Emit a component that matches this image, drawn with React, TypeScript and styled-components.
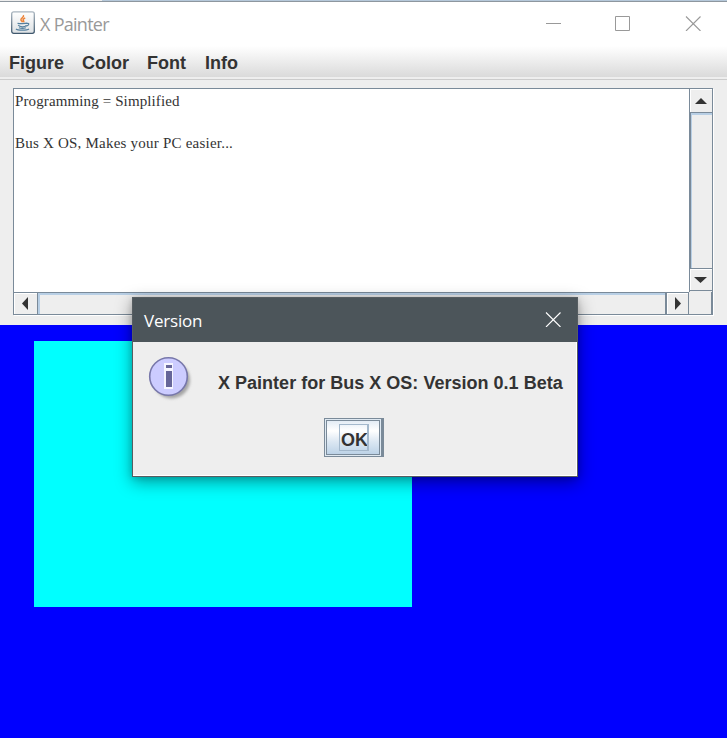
import React from "react";
import styled, { createGlobalStyle } from "styled-components";

const steel = "#7a8a99";
const sky = "#b8cfe5";
const panel = "#eeeeee";
const ink = "#333333";

const GlobalStyle = createGlobalStyle`
  * { box-sizing: border-box; }
  body { margin: 0; overflow: hidden; background: ${panel}; }
`;

const Window = styled.div`
  position: relative;
  display: flex;
  flex-direction: column;
  width: 727px;
  height: 738px;
  overflow: hidden;
  background: ${panel};
  color: ${ink};
  font-family: "Liberation Sans", Arial, sans-serif;
`;

const TopEdge = styled.div`
  height: 2px;
  flex: none;
  background: linear-gradient(90deg, #eeeeee 102px, #b5c8da 102px);
  border-bottom: 1px solid #8e979f;
`;

const TitleBar = styled.header`
  display: flex;
  flex: none;
  height: 44px;
  padding-left: 11px;
  background: #ffffff;
`;

const JavaIcon = styled.svg`
  width: 24px;
  height: 24px;
  margin-top: 8px;
  flex: none;
`;

const Title = styled.span`
  margin: 8px 0 0 5px;
  flex: 1;
  font: 18px/28px "Open Sans", "Noto Sans", sans-serif;
  letter-spacing: -0.72px;
  color: #999999;
`;

const WindowControls = styled.div`
  display: flex;
  gap: 54px;
  padding: 13px 26px 0 0;
`;

const ControlIcon = styled.svg<{ $color: string }>`
  display: block;
  width: 16px;
  height: 16px;
  fill: none;
  stroke: ${(p) => p.$color};
`;

const MenuBar = styled.nav`
  display: flex;
  flex: none;
  gap: 18px;
  height: 34px;
  padding: 5px 0 0 9px;
  border-bottom: 1px solid #cccccc;
  background: linear-gradient(#ffffff, #dadada 31px, #eeeeee 31px);
`;

const MenuItem = styled.span<{ $width: number }>`
  width: ${(p) => p.$width}px;
  font-size: 18px;
  font-weight: bold;
  line-height: 24px;
  white-space: nowrap;
`;

const EditorArea = styled.section`
  flex: none;
  height: 245px;
  padding: 8px 14px 0 13px;
`;

const ScrollPane = styled.div`
  display: grid;
  grid-template: 203px 22px / 675px 23px;
  width: 700px;
  height: 227px;
  border: 1px solid ${steel};
  box-shadow: 1px 1px 0 #ffffff;
`;

const TextPane = styled.div`
  padding: 2px 0 0 1px;
  background: #ffffff;
  font: 15px/21px "Liberation Serif", "Times New Roman", serif;
`;

const Line = styled.div<{ $spacing: number }>`
  height: 21px;
  letter-spacing: ${(p) => p.$spacing}px;
  white-space: pre;
`;

const VerticalBar = styled.div`
  display: grid;
  grid-template-rows: 24px 156px 22px;
  border-left: 1px solid ${steel};
`;

const HorizontalBar = styled.div`
  display: grid;
  grid-template-columns: 24px 629px 22px;
  border-top: 1px solid ${steel};
`;

const ArrowButton = styled.div<{ $side: "bottom" | "right" | "none" }>`
  display: flex;
  align-items: center;
  justify-content: center;
  padding-right: 1px;
  box-shadow: inset 1px 1px 0 #ffffff;
  ${(p) => p.$side !== "none" && `border-${p.$side}: 1px solid ${steel};`}
  svg { display: block; fill: ${ink}; }
`;

const VerticalThumb = styled.div`
  margin-left: -1px;
  border-left: 2px solid ${steel};
  border-bottom: 1px solid ${steel};
  box-shadow: inset 1px 2px 0 ${sky};
`;

const HorizontalThumb = styled.div`
  border-right: 2px solid ${steel};
  box-shadow: inset 2px 2px 0 ${sky};
`;

const Corner = styled.div`
  margin-left: -1px;
  border-left: 1px solid ${steel};
  border-right: 1px solid ${steel};
`;

const Canvas = styled.main`
  position: relative;
  flex: 1;
  background: #0000ff;
`;

const Rectangle = styled.div`
  position: absolute;
  left: 34px;
  top: 16px;
  width: 378px;
  height: 266px;
  background: #00ffff;
`;

const Dialog = styled.div`
  position: absolute;
  left: 132px;
  top: 297px;
  width: 446px;
  height: 180px;
  border: 1px solid #565d61;
  background: ${panel};
  box-shadow: 0 5px 16px rgba(0, 0, 0, 0.4), 0 1px 6px rgba(0, 0, 0, 0.15);
`;

const DialogHeader = styled.div`
  display: flex;
  justify-content: space-between;
  height: 44px;
  padding: 9px 16px 0 11px;
  background: #4c555a;
  color: #ffffff;
  font: 17px/28px "Open Sans", "Noto Sans", sans-serif;
  letter-spacing: -0.2px;
  svg { margin-top: 4px; }
`;

const DialogBody = styled.div`
  display: flex;
  flex-direction: column;
  height: 134px;
  border-right: 1px solid #ffffff;
  border-bottom: 1px solid #ffffff;
`;

const Message = styled.div`
  display: flex;
  height: 76px;
  padding: 12px 0 0 13px;
  font-size: 18px;
  font-weight: bold;
  line-height: 24px;
  white-space: nowrap;
  svg { flex: none; }
  span { margin: 17px 0 0 22px; letter-spacing: 0.015px; }
`;

const OkButton = styled.button`
  display: flex;
  align-items: center;
  justify-content: center;
  align-self: flex-start;
  width: 60px;
  height: 39px;
  margin-left: 191px;
  padding: 0 0 0 2px;
  border: 1px solid ${steel};
  border-right-width: 3px;
  border-radius: 0;
  background: linear-gradient(#dde8f3, #ffffff 32%, #dde8f3 60%, #b8cfe5);
  box-shadow: inset 0 0 0 1px #dfe9f2, inset 0 0 0 2px ${steel};
`;

const OkLabel = styled.span`
  width: 30px;
  height: 27px;
  border: 1px solid #a3b8cc;
  border-right-width: 2px;
  padding-left: 1px;
  color: ${ink};
  font: bold 18px/31px "Liberation Sans", Arial, sans-serif;
  overflow: hidden;
`;

const menus = [
  { label: "Figure", width: 55 },
  { label: "Color", width: 47 },
  { label: "Font", width: 40 },
  { label: "Info", width: 34 },
];

const CloseGlyph = ({ color }: { color: string }) => (
  <ControlIcon $color={color} viewBox="0 0 16 16">
    <path d="M1 1.5 15.5 16M15.5 1.5 1 16" strokeWidth="1.1" />
  </ControlIcon>
);

const JavaCup = () => (
  <JavaIcon viewBox="0 0 24 24">
    <defs>
      <linearGradient id="tile" x1="0" y1="0" x2="0" y2="1">
        <stop offset="0" stopColor="#ffffff" />
        <stop offset="1" stopColor="#dde1e4" />
      </linearGradient>
      <linearGradient id="rim" x1="0" y1="0" x2="0" y2="1">
        <stop offset="0" stopColor="#a9b5bf" />
        <stop offset="1" stopColor="#3f586d" />
      </linearGradient>
    </defs>
    <rect x=".7" y="1.8" width="22.6" height="21.5" rx="2" fill="url(#tile)" stroke="url(#rim)" strokeWidth="1.3" />
    <path d="M12.4 5.2c1.3 2.2-3.5 3-2.4 5 .3.7 1.3 1.2 1.5 2M14.2 8c-2.7 1-2.3 2.1-1.5 3.1.3.5.1.9-.2 1.2" fill="none" stroke="#ed8134" strokeWidth="1.5" />
    <path d="M6.5 13.2c2 .7 7.5.6 9.6 0M7.2 15c1.4 2.4 6.9 2.3 8.2.2M16 13.4c2.6-.7 2.4 2-.8 2.8M7.9 17.8c2 .7 5 .7 7 0M5 19c1.5 1.5 11 1.5 13 0" fill="none" stroke="#55809f" strokeWidth="1.2" />
  </JavaIcon>
);

const InfoIcon = () => (
  <svg width="50" height="50" viewBox="0 0 50 50">
    <defs>
      <filter id="soft"><feGaussianBlur stdDeviation="1.7" /></filter>
    </defs>
    <circle cx="25.5" cy="26" r="18.5" fill="#a4a4a4" filter="url(#soft)" />
    <circle cx="22.5" cy="22.5" r="18.8" fill="#ccccff" stroke="#7777aa" strokeWidth="1.6" />
    <path d="M18 9h9v26h-9z" fill="#f5f5ff" />
    <path d="M20 11h6v3h-6zM20 17h6v16h-6z" fill="#666699" />
  </svg>
);

export default function App() {
  return (
    <Window>
      <GlobalStyle />
      <TopEdge />
      <TitleBar>
        <JavaCup />
        <Title>X Painter</Title>
        <WindowControls>
          <ControlIcon $color="#999999" viewBox="0 0 16 16"><path d="M1 8.5h15" /></ControlIcon>
          <ControlIcon $color="#999999" viewBox="0 0 16 16"><path d="M.5 1.5h14v14H.5z" /></ControlIcon>
          <CloseGlyph color="#999999" />
        </WindowControls>
      </TitleBar>
      <MenuBar>
        {menus.map((m) => <MenuItem key={m.label} $width={m.width}>{m.label}</MenuItem>)}
      </MenuBar>
      <EditorArea>
        <ScrollPane>
          <TextPane>
            <Line $spacing={0.12}>Programming = Simplified</Line>
            <Line $spacing={0}> </Line>
            <Line $spacing={0.22}>Bus X OS, Makes your PC easier...</Line>
          </TextPane>
          <VerticalBar>
            <ArrowButton $side="bottom"><svg width="12" height="6"><path d="M6 0 12 6H0z" /></svg></ArrowButton>
            <VerticalThumb />
            <ArrowButton $side="bottom"><svg width="13" height="6"><path d="M0 0H13L6.5 6z" /></svg></ArrowButton>
          </VerticalBar>
          <HorizontalBar>
            <ArrowButton $side="right"><svg width="6" height="13"><path d="M6 0V13L0 6.5z" /></svg></ArrowButton>
            <HorizontalThumb />
            <ArrowButton $side="none"><svg width="6" height="13"><path d="M0 0V13L6 6.5z" /></svg></ArrowButton>
          </HorizontalBar>
          <Corner />
        </ScrollPane>
      </EditorArea>
      <Canvas><Rectangle /></Canvas>
      <Dialog>
        <DialogHeader>
          Version
          <CloseGlyph color="#ffffff" />
        </DialogHeader>
        <DialogBody>
          <Message>
            <InfoIcon />
            <span>X Painter for Bus X OS: Version 0.1 Beta</span>
          </Message>
          <OkButton><OkLabel>OK</OkLabel></OkButton>
        </DialogBody>
      </Dialog>
    </Window>
  );
}
